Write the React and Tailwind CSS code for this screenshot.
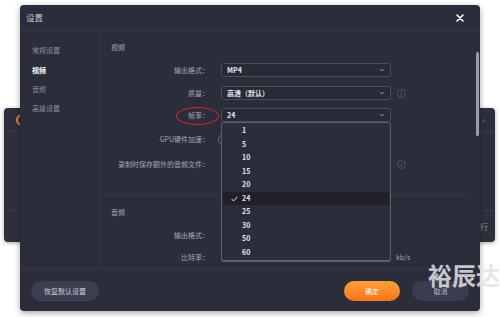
import React from "react";

const F = { fontFamily: '"Noto Sans CJK SC", "Noto Sans", sans-serif' };

function Chevron() {
  return (
    <svg width="6" height="4" viewBox="0 0 6 4" className="shrink-0">
      <path d="M0.6 0.7 L3 3.1 L5.4 0.7" fill="none" stroke="#9a9daa" strokeWidth="0.9" />
    </svg>
  );
}

function Info() {
  return (
    <svg width="9" height="9" viewBox="0 0 10 10" className="shrink-0">
      <circle cx="5" cy="5" r="4.4" fill="none" stroke="#5f6270" strokeWidth="0.8" />
      <rect x="4.55" y="4.2" width="0.9" height="3.2" fill="#5f6270" />
      <rect x="4.55" y="2.5" width="0.9" height="0.9" fill="#5f6270" />
    </svg>
  );
}

function Select({ value, info }) {
  return (
    <div className="flex items-center">
      <div className="w-[170px] h-[14px] border border-[#4a4d5b] rounded-[3px] bg-[#272935] flex items-center justify-between pl-[5px] pr-[5px]">
        <span className="text-[7px] font-bold text-[#e8e9ee] leading-none">{value}</span>
        <Chevron />
      </div>
      {info && (
        <div className="ml-[6px]">
          <Info />
        </div>
      )}
    </div>
  );
}

function Row({ label, children, className = "" }) {
  return (
    <div className={"flex items-center h-[14px] " + className}>
      <div className="w-[109px] text-right text-[7px] text-[#a4a7b3] leading-none pr-0">{label}</div>
      <div className="ml-[12px] flex items-center">{children}</div>
    </div>
  );
}

export default function App() {
  const items = ["1", "5", "10", "15", "20", "24", "25", "30", "50", "60"];
  return (
    <div className="relative w-[500px] h-[317px] bg-white overflow-hidden" style={F}>
      {/* window behind */}
      <div className="absolute left-[4px] top-[108px] w-[491px] h-[134px] rounded-[4px] bg-[#2d2f3c] shadow-[0_1px_4px_rgba(0,0,0,0.35)] flex flex-col">
        <div className="h-[24px] border-b border-[#3a3c49] flex items-center justify-between pl-[12px] pr-[10px]">
          <div className="w-[12px] h-[12px] rounded-full border-[2px] border-[#e08a2c]" />
          <span className="text-[8px] text-[#9a9ca8]">‹</span>
        </div>
        <div className="h-[78px]" />
        <div className="flex-1 border-t border-[#3a3c49] flex items-center justify-end pr-[7px]">
          <span className="text-[8px] text-[#8e909c]">执行</span>
        </div>
      </div>

      {/* main dialog */}
      <div className="absolute left-[20px] top-[5px] w-[460px] h-[306px] rounded-[4px] bg-[#2b2d3a] shadow-[0_2px_6px_rgba(0,0,0,0.35)] flex flex-col">
        {/* header */}
        <div className="h-[26px] border-b border-[#353745] flex items-center justify-between pl-[6px] pr-[16px]">
          <span className="text-[8.5px] text-[#c9cbd3] leading-none">设置</span>
          <svg width="8" height="8" viewBox="0 0 8 8">
            <path d="M1 1 L7 7 M7 1 L1 7" stroke="#ffffff" strokeWidth="1.6" strokeLinecap="round" />
          </svg>
        </div>

        {/* body */}
        <div className="flex h-[237px]">
          <div className="w-[80px] border-r border-[#353745] pl-[12px] flex flex-col text-[7px] leading-none">
            <div className="h-[14px] mt-[12px] flex items-center text-[#8b8e9a]">常规设置</div>
            <div className="h-[14px] mt-[6px] flex items-center text-white font-bold">视频</div>
            <div className="h-[14px] mt-[5px] flex items-center text-[#8b8e9a]">音频</div>
            <div className="h-[14px] mt-[5px] flex items-center text-[#8b8e9a]">高级设置</div>
          </div>

          <div className="flex-1 relative flex flex-col pt-[9px]">
            <div className="h-[14px] pl-[11px] flex items-center text-[7px] text-[#a4a7b3] leading-none">视频</div>
            <Row label="输出格式：" className="mt-[9px]">
              <Select value="MP4" />
            </Row>
            <Row label="质量：" className="mt-[9px]">
              <Select value="高清（默认）" info />
            </Row>
            <Row label="帧率：" className="mt-[8px]">
              <Select value="24" />
            </Row>
            <Row label="GPU硬件加速：" className="mt-[10px]">
              <div className="w-[20px] h-[11px] rounded-full border border-[#6a6d7a] -ml-[3px]" />
            </Row>
            <Row label="录制时保存额外的音频文件：" className="mt-[11px]">
              <div className="w-[170px]" />
              <div className="ml-[6px]">
                <Info />
              </div>
            </Row>
            <div className="mt-[24px] h-px bg-[#363846] mr-[12px]" />
            <div className="h-[14px] mt-[9px] pl-[11px] flex items-center text-[7px] text-[#a4a7b3] leading-none">音频</div>
            <Row label="输出格式：" className="mt-[9px]">
              <div />
            </Row>
            <Row label="比特率：" className="mt-[8px]">
              <div className="w-[170px]" />
              <span className="ml-[5px] text-[7px] text-[#a4a7b3] leading-none">kb/s</span>
            </Row>

            {/* scrollbar */}
            <div className="absolute right-[1px] top-[21px] w-[3px] h-[84px] rounded-full bg-[#9a9ca6]" />

            {/* red ellipse annotation */}
            <div className="absolute left-[76px] top-[76px] w-[43px] h-[18px] rounded-[50%] border-[1.5px] border-[#e3262c]" />

            {/* dropdown list */}
            <div className="absolute left-[121px] top-[91px] w-[170px] h-[139px] border border-[#5c5f6c] rounded-[3px] bg-[#2b2d3a] py-[1px] px-[1px] flex flex-col shadow-[0_1px_0_#5c5f6c]">
              {items.map((it) => (
                <div
                  key={it}
                  className={
                    "h-[13.5px] flex items-center relative text-[7px] font-bold text-[#e3e4ea] leading-none pl-[19px] " +
                    (it === "24" ? "bg-[#1f2029]" : "")
                  }
                >
                  {it === "24" && (
                    <svg width="7" height="6" viewBox="0 0 7 6" className="absolute left-[8px] top-[4px]">
                      <path d="M0.6 3 L2.6 5 L6.4 0.8" fill="none" stroke="#e3e4ea" strokeWidth="1" />
                    </svg>
                  )}
                  {it}
                </div>
              ))}
            </div>
          </div>
        </div>

        {/* footer */}
        <div className="flex-1 border-t border-[#353745] flex justify-between px-[11px] pt-[12px]">
          <div className="w-[68px] h-[20px] rounded-full bg-[#3c3f51] flex items-center justify-center text-[7px] text-[#c9cbd3] leading-none">
            恢复默认设置
          </div>
          <div className="flex gap-[12px]">
            <div className="w-[56px] h-[20px] rounded-full bg-gradient-to-b from-[#ffa03a] to-[#fc7416] flex items-center justify-center text-[7px] text-white leading-none">
              确定
            </div>
            <div className="w-[57px] h-[20px] rounded-full bg-[#3a3d4f] flex items-center justify-center text-[7px] text-[#b4b6c0] leading-none">
              取消
            </div>
          </div>
        </div>
      </div>

      {/* watermark */}
      <div className="absolute left-[428px] top-[263px] text-[24px] font-bold leading-none whitespace-nowrap text-[rgba(226,227,231,0.85)]">
        裕辰达
      </div>
    </div>
  );
}
